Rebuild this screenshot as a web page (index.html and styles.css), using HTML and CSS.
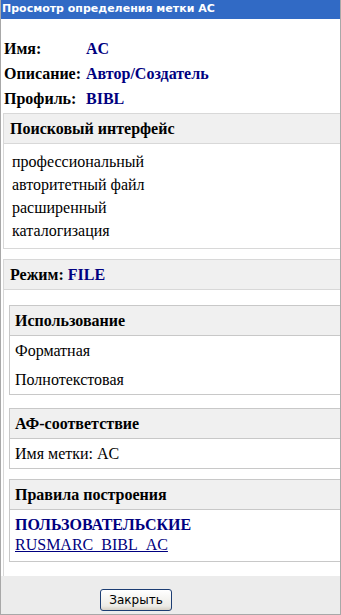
FILE: index.html
```html
<!DOCTYPE html>
<html lang="ru">
<head>
    <meta charset="UTF-8">
    <title>Просмотр определения метки AC</title>
    <link rel="stylesheet" href="styles.css">
</head>
<body>
<div class="window">
    <div class="titlebar">Просмотр определения метки AC</div>

    <div class="content">
        <!-- Tag properties -->
        <table class="props">
            <tr><th>Имя:</th><td>AC</td></tr>
            <tr><th>Описание:</th><td>Автор/Создатель</td></tr>
            <tr><th>Профиль:</th><td>BIBL</td></tr>
        </table>

        <div class="box">
            <div class="box-head">Поисковый интерфейс</div>
            <ul class="list">
                <li>профессиональный</li>
                <li>авторитетный файл</li>
                <li>расширенный</li>
                <li>каталогизация</li>
            </ul>
        </div>

        <div class="box mode">
            <div class="box-head">Режим: <span class="val">FILE</span></div>

            <div class="box inner">
                <div class="box-head">Использование</div>
                <div class="row">Форматная</div>
                <div class="row">Полнотекстовая</div>
            </div>

            <div class="box inner af">
                <div class="box-head">АФ-соответствие</div>
                <div class="row">Имя метки: AC</div>
            </div>

            <div class="box inner">
                <div class="box-head">Правила построения</div>
                <div class="rules">
                    <div class="val">ПОЛЬЗОВАТЕЛЬСКИЕ</div>
                    <a href="#">RUSMARC_BIBL_AC</a>
                </div>
            </div>
        </div>
    </div>

    <div class="footer">
        <button>Закрыть</button>
    </div>
</div>
</body>
</html>
```

FILE: styles.css
```css
html, body { margin: 0; padding: 0; background: #fff; }
.window { width: 339px; height: 614px; border: 1px solid #a8a8a8; border-top: 0; overflow: hidden; display: flex; flex-direction: column; }
.titlebar { background: #316ac5; color: #fff; font: bold 11px "DejaVu Sans", Verdana, sans-serif; height: 19px; line-height: 17px; padding-left: 1px; white-space: nowrap; }
.content { flex: 1; background: #fff; font: 16px "Liberation Serif", "Times New Roman", serif; color: #000; padding: 17px 0 0 2px; overflow: hidden; }
.props { border-collapse: collapse; font-weight: bold; margin-bottom: 2px; }
.props th { text-align: left; padding: 0 5px 0 1px; height: 25px; }
.props td { color: #000080; padding: 0; }
.box { width: 380px; border: 1px solid #d8d8d8; margin-bottom: 10px; background: #fff; }
.box-head { background: #f0f0f0; border-bottom: 1px solid #d8d8d8; font-weight: bold; height: 29px; line-height: 29px; padding-left: 6px; }
.val { color: #000080; font-weight: bold; }
.list { list-style: none; margin: 0; padding: 6px 0 6px 8px; }
.list li { line-height: 23px; }
.mode { margin-bottom: 0; padding-bottom: 14px; }
.mode > .box-head { margin-bottom: 15px; }
.inner { width: 360px; margin: 0 0 13px 5px; border-color: #c8c8c8; }
.inner .box-head { padding-left: 5px; border-bottom-color: #c8c8c8; }
.inner.af { margin-bottom: 10px; }
.inner:last-child { margin-bottom: 0; }
.row { line-height: 29px; padding-left: 5px; }
.rules { padding: 5px 5px 6px; line-height: 20px; }
.rules a { color: #000080; }
.footer { height: 38px; background: #ececec; padding-left: 99px; padding-top: 13px; box-sizing: border-box; }
button { font: 12px "DejaVu Sans", Tahoma, sans-serif; width: 72px; height: 22px; border: 1px solid #1c3d73; border-radius: 3px; background: linear-gradient(#fff, #ecebe6 80%, #d6d0c5); padding: 0; color: #000; }
```
